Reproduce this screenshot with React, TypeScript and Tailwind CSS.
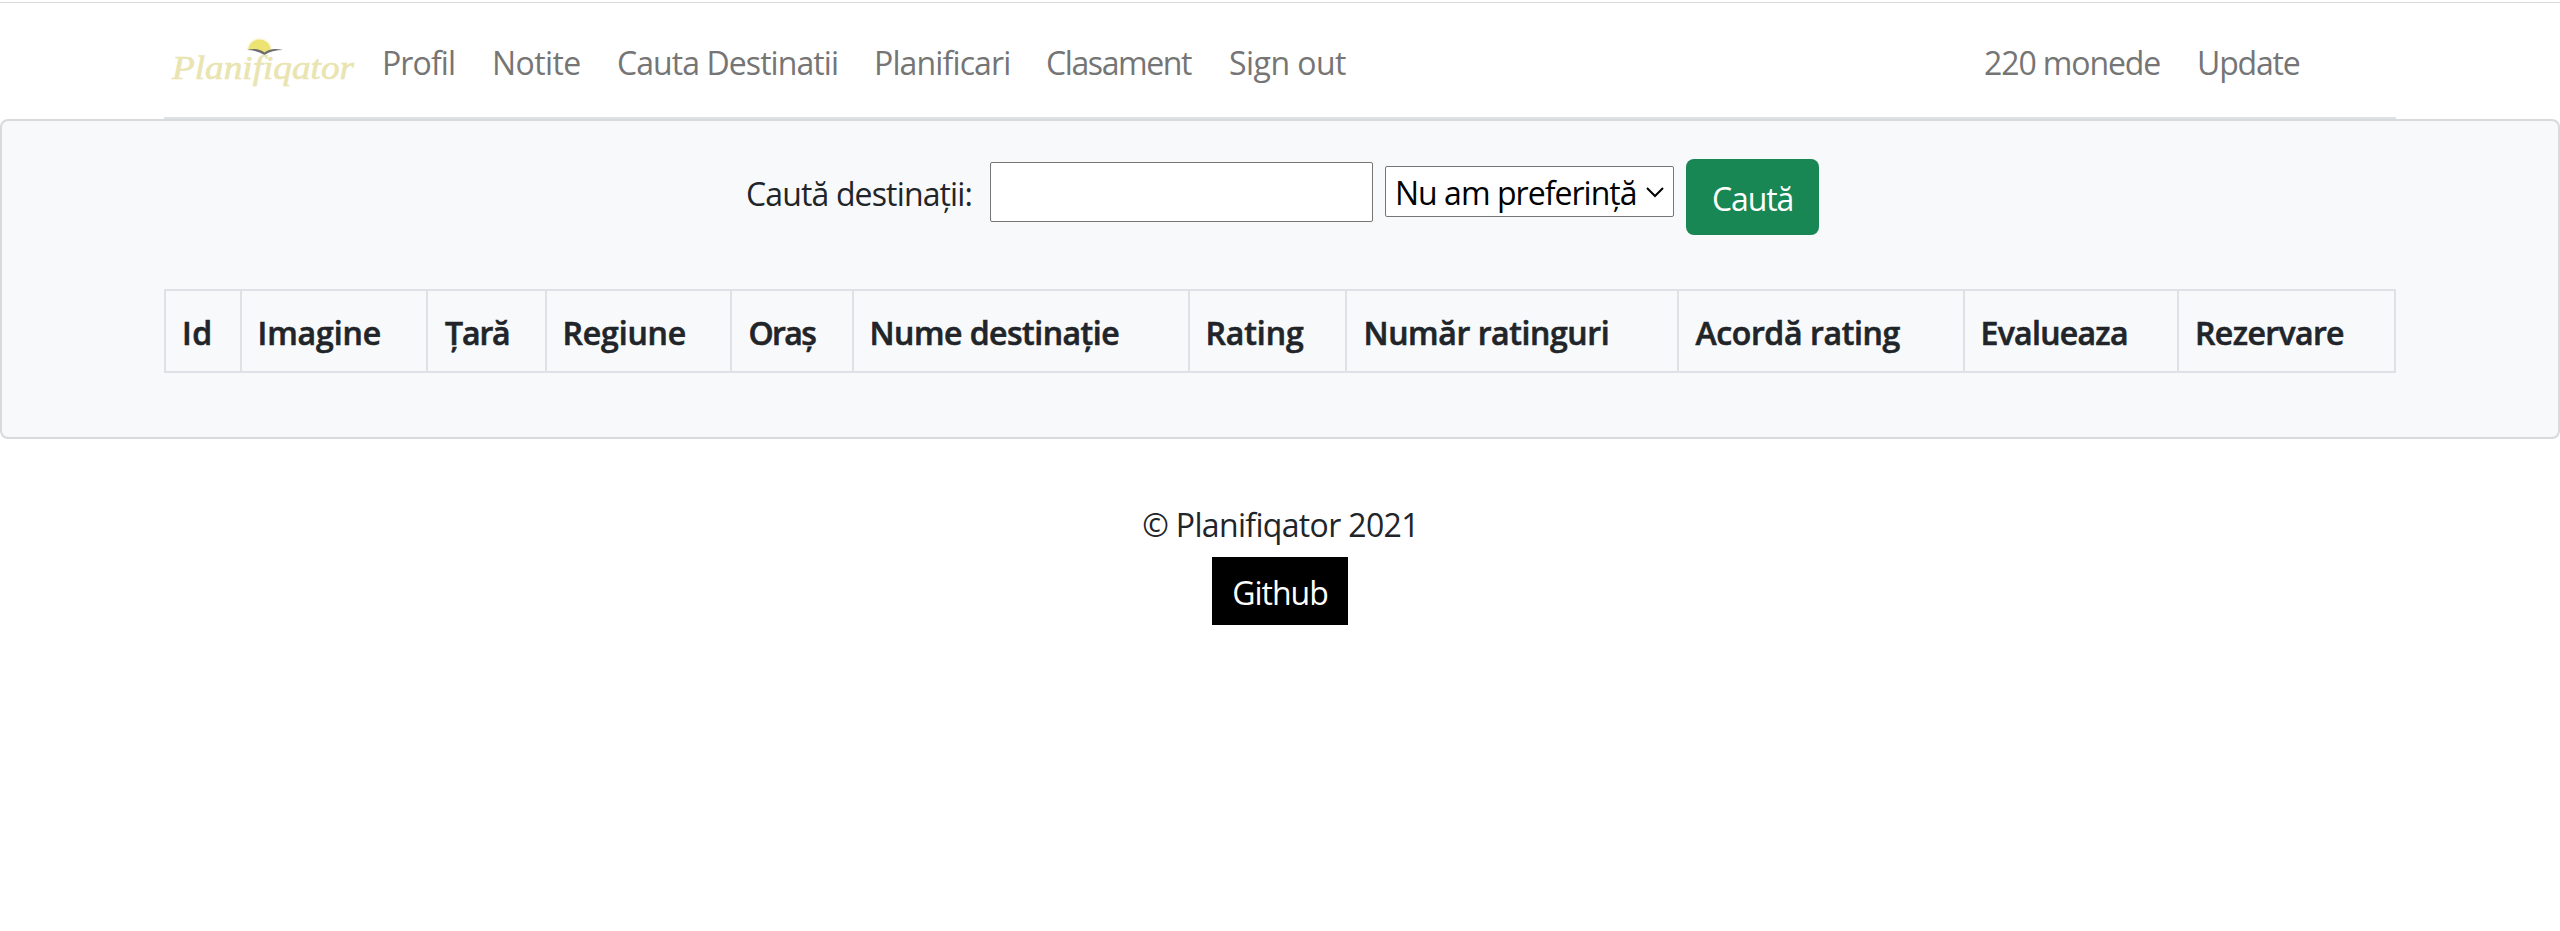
import React from "react";

const leftLinks = [
  { label: "Profil", cls: "w-[110px] tracking-[-0.88px]" },
  { label: "Notite", cls: "w-[125px] tracking-[-0.59px]" },
  { label: "Cauta Destinatii", cls: "w-[257px] tracking-[-0.93px]" },
  { label: "Planificari", cls: "w-[172px] tracking-[-0.86px]" },
  { label: "Clasament", cls: "w-[183px] tracking-[-1.41px]" },
  { label: "Sign out", cls: "w-[120px] tracking-[-0.54px]" },
];

const rightLinks = [
  { label: "220 monede", cls: "w-[213px] tracking-[-1.1px]" },
  { label: "Update", cls: "w-[199px] tracking-[-1.2px]" },
];

const columns = [
  { label: "Id", cls: "w-[78px] border-l-2 pl-[16px] tracking-[0.5px]" },
  { label: "Imagine", cls: "w-[186px] pl-[15.5px] tracking-[-0.1px]" },
  { label: "Țară", cls: "w-[119px] pl-[17px] tracking-[-1.12px]" },
  { label: "Regiune", cls: "w-[185px] pl-[15.5px] tracking-[-0.15px]" },
  { label: "Oraș", cls: "w-[122px] pl-[16.5px] tracking-[-1.62px]" },
  { label: "Nume destinație", cls: "w-[336px] pl-[15.5px] tracking-[-0.5px]" },
  { label: "Rating", cls: "w-[157px] pl-[15.5px] tracking-[-0.1px]" },
  { label: "Număr ratinguri", cls: "w-[332px] pl-[16.5px] tracking-[-0.4px]" },
  { label: "Acordă rating", cls: "w-[286px] pl-[16.5px] tracking-[-0.38px]" },
  { label: "Evalueaza", cls: "w-[214px] pl-[15.5px] tracking-[-0.7px]" },
  { label: "Rezervare", cls: "w-[217px] pl-[16px] tracking-[-0.6px]" },
];

function Logo() {
  return (
    <svg className="block h-[64px] w-[200px] shrink-0" viewBox="0 0 200 64">
      <defs>
        <radialGradient id="glow">
          <stop offset="0.7" stopColor="#ece372" stopOpacity="0.5" />
          <stop offset="1" stopColor="#ece372" stopOpacity="0" />
        </radialGradient>
        <clipPath id="horizon">
          <path d="M78 0H112V20L99 25L91 21H78Z" />
        </clipPath>
      </defs>
      <g clipPath="url(#horizon)">
        <circle cx="94.5" cy="22" r="14" fill="url(#glow)" />
        <ellipse cx="94.5" cy="21" rx="11" ry="10.5" fill="#ece372" />
      </g>
      <path
        d="M82 21Q93 18 99.5 23.5Q106 18 118 21Q107 21 99.5 26Q92 21 82 21Z"
        fill="#6d6c70"
      />
      <text
        x="7"
        y="50"
        textLength="182"
        lengthAdjust="spacingAndGlyphs"
        fill="#e9e4b0"
        stroke="#e9e4b0"
        strokeWidth="0.6"
        className="font-['Liberation_Serif',serif] text-[34px] italic"
      >
        Planifiqator
      </text>
    </svg>
  );
}

export default function App() {
  return (
    <div className="min-h-[931px] bg-white font-['Open_Sans','Noto_Sans',sans-serif] text-[32px] leading-[48px] text-[#212529]">
      <div className="h-[2px]" />
      <header className="h-[117px] border-t border-[#dcdcdd] px-[164px]">
        <nav className="flex h-full items-start border-b-2 border-[#dee2e6] pl-px text-[#757575]">
          <div className="pt-[26px]">
            <Logo />
          </div>
          <ul className="flex pt-[36px] pl-[17px]">
            {leftLinks.map((l) => (
              <li key={l.label} className={`whitespace-nowrap ${l.cls}`}>
                <a href="#">{l.label}</a>
              </li>
            ))}
          </ul>
          <ul className="ml-auto flex pt-[36px]">
            {rightLinks.map((l) => (
              <li key={l.label} className={`whitespace-nowrap ${l.cls}`}>
                <a href="#">{l.label}</a>
              </li>
            ))}
          </ul>
        </nav>
      </header>

      <main className="h-[320px] rounded-lg border-2 border-[#d8dadc] bg-[#f8f9fa] px-[162px] pt-[38px]">
        <form className="flex items-start pl-[582px]">
          <label htmlFor="q" className="w-[244px] pt-[11px] tracking-[-0.86px] whitespace-nowrap">
            Caută destinații:
          </label>
          <input
            id="q"
            className="mt-[3px] h-[60px] w-[383px] rounded-[2px] border border-[#767676] bg-white px-1"
          />
          <div className="mt-[7px] ml-3 flex h-[51px] w-[289px] items-center rounded-[2px] border border-[#767676] bg-white pt-[3px] pl-[9px] text-black">
            <span className="w-[250px] tracking-[-0.97px] whitespace-nowrap">Nu am preferință</span>
            <svg className="mb-[3px] h-[12px] w-[20px]" viewBox="0 0 20 12" fill="none" stroke="#000" strokeWidth="2">
              <path d="M2 2L10 10L18 2" />
            </svg>
          </div>
          <button
            type="button"
            className="ml-3 h-[76px] w-[133px] rounded-lg bg-[#198754] pt-[4px] pl-[26px] text-left tracking-[-1.09px] text-white"
          >
            Caută
          </button>
        </form>

        <table className="mt-[54px] w-[2232px] table-fixed border-separate border-spacing-0">
          <thead>
            <tr>
              {columns.map((c) => (
                <th
                  key={c.label}
                  className={`h-[84px] border-y-2 border-r-2 border-[#dee2e6] p-0 pt-[3px] text-left font-semibold whitespace-nowrap [-webkit-text-stroke:0.6px_#212529] ${c.cls}`}
                >
                  {c.label}
                </th>
              ))}
            </tr>
          </thead>
        </table>
      </main>

      <footer className="flex flex-col items-center pt-[62px]">
        <p className="pl-px tracking-[-0.66px]">© Planifiqator 2021</p>
        <a href="#" className="mt-[8px] flex h-[68px] w-[136px] items-center justify-center bg-black pt-[3px] tracking-[-1px] text-white">
          Github
        </a>
      </footer>
    </div>
  );
}
